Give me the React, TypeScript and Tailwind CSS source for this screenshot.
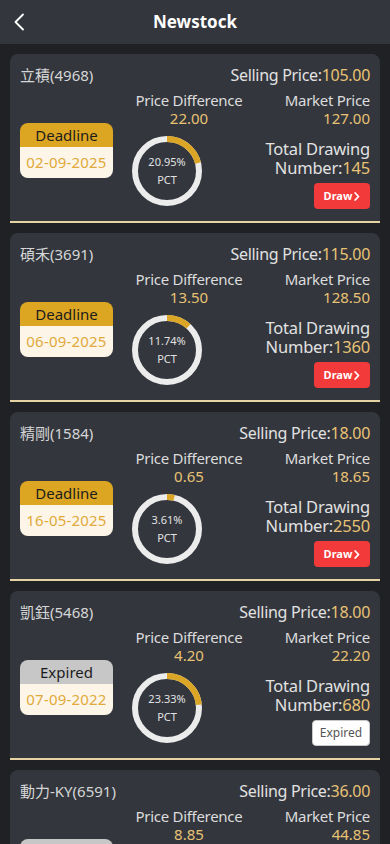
import React from "react";

interface Stock {
    name: string;
    selling: string;
    diff: string;
    market: string;
    total: string;
    date: string;
    pct: number;
    expired: boolean;
}

const stocks: Stock[] = [
    { name: '立積(4968)', selling: '105.00', diff: '22.00', market: '127.00', total: '145', date: '02-09-2025', pct: 20.95, expired: false },
    { name: '碩禾(3691)', selling: '115.00', diff: '13.50', market: '128.50', total: '1360', date: '06-09-2025', pct: 11.74, expired: false },
    { name: '精剛(1584)', selling: '18.00', diff: '0.65', market: '18.65', total: '2550', date: '16-05-2025', pct: 3.61, expired: false },
    { name: '凱鈺(5468)', selling: '18.00', diff: '4.20', market: '22.20', total: '680', date: '07-09-2022', pct: 23.33, expired: true },
    { name: '動力-KY(6591)', selling: '36.00', diff: '8.85', market: '44.85', total: '1200', date: '05-09-2022', pct: 24.58, expired: true },
];

function Ring({ pct }: { pct: number }) {
    const r = 32;
    const c = 2 * Math.PI * r;
    return (
        <div className="relative w-[70px] h-[70px]">
            <svg width="70" height="70" viewBox="0 0 70 70" className="-rotate-90">
                <circle cx="35" cy="35" r={r} fill="none" stroke="#ececec" strokeWidth="6" />
                <circle
                    cx="35" cy="35" r={r} fill="none" stroke="#dba625" strokeWidth="6"
                    strokeDasharray={`${(c * pct) / 100} ${c}`}
                />
            </svg>
            <div className="absolute inset-0 flex flex-col items-center justify-center text-[11px] text-[#e2e2e2] leading-[18px]">
                <span>{pct.toFixed(2)}%</span>
                <span>PCT</span>
            </div>
        </div>
    );
}

function StockCard({ s }: { s: Stock }) {
    return (
        <div className="bg-[#33363d] rounded-t-lg border-b-2 border-[#e6d3a4] h-[169px] px-[10px] pt-[11px] shrink-0">
            {/* Name + selling price */}
            <div className="flex items-center justify-between h-[20px]">
                <span className="text-[15px] text-[#d6d6d6]">{s.name}</span>
                <span className="text-[16px] text-[#e2e2e2] tracking-[-0.3px]">
                    Selling Price:<span className="text-[#e8c274]">{s.selling}</span>
                </span>
            </div>

            <div className="flex mt-[6px]">
                {/* Deadline badge */}
                <div className="w-[93px] mt-[32px] rounded-lg overflow-hidden self-start">
                    <div className={`h-[24px] flex items-center justify-center text-[15px] text-[#1c1c1c] ${s.expired ? 'bg-[#c7c7c7]' : 'bg-[#dca623]'}`}>
                        {s.expired ? 'Expired' : 'Deadline'}
                    </div>
                    <div className="h-[31px] bg-[#fdf6e8] flex items-center justify-center text-[15px] text-[#e1a93c] tracking-[0.2px]">
                        {s.date}
                    </div>
                </div>

                {/* Price difference + ring */}
                <div className="w-[114px] ml-[19px] flex flex-col">
                    <div className="text-center text-[15px] leading-[18px] text-[#dcdcdc] tracking-[-0.3px]">Price Difference</div>
                    <div className="text-center text-[15px] leading-[18px] text-[#e8c274]">{s.diff}</div>
                    <div className="mt-[9px]">
                        <Ring pct={s.pct} />
                    </div>
                </div>

                {/* Market price + total */}
                <div className="flex-1 flex flex-col items-end text-right">
                    <div className="text-[15px] leading-[18px] text-[#dcdcdc] tracking-[-0.3px]">Market Price</div>
                    <div className="text-[15px] leading-[18px] text-[#e8c274]">{s.market}</div>
                    <div className="mt-[12px] text-[16.5px] leading-[19px] text-[#e2e2e2] tracking-[-0.2px]">Total Drawing</div>
                    <div className="text-[16.5px] leading-[19px] text-[#e2e2e2] tracking-[-0.2px]">
                        Number:<span className="text-[#e8c274]">{s.total}</span>
                    </div>
                    {s.expired ? (
                        <div className="mt-[6px] w-[58px] h-[26px] rounded bg-white border border-[#c9c9c9] flex items-center justify-center text-[12px] text-[#555]">
                            Expired
                        </div>
                    ) : (
                        <button className="mt-[6px] w-[56px] h-[26px] rounded bg-[#f23a3a] flex items-center justify-center gap-[2px] text-[11px] font-bold text-white">
                            Draw
                            <svg width="6" height="9" viewBox="0 0 6 9" fill="none">
                                <path d="M1.2 1l3.3 3.5L1.2 8" stroke="white" strokeWidth="1.8" strokeLinecap="round" strokeLinejoin="round" />
                            </svg>
                        </button>
                    )}
                </div>
            </div>
        </div>
    );
}

export default function App() {
    return (
        <div className="min-h-screen bg-[#202124] flex flex-col" style={{ fontFamily: '"Noto Sans", "Noto Sans CJK TC", sans-serif' }}>
            {/* Header */}
            <div className="h-[44px] bg-[#33363d] relative flex items-center justify-center shrink-0">
                <svg className="absolute left-[13px] top-[13px]" width="13" height="18" viewBox="0 0 13 18" fill="none">
                    <path d="M10 1.5L2.5 9l7.5 7.5" stroke="white" strokeWidth="1.8" strokeLinecap="round" strokeLinejoin="round" />
                </svg>
                <span className="text-[17px] font-bold text-white">Newstock</span>
            </div>

            <div className="flex flex-col gap-[10px] px-[10px] pt-[10px] pb-[10px]">
                {stocks.map((s, i) => (
                    <StockCard key={i} s={s} />
                ))}
            </div>
        </div>
    );
}
